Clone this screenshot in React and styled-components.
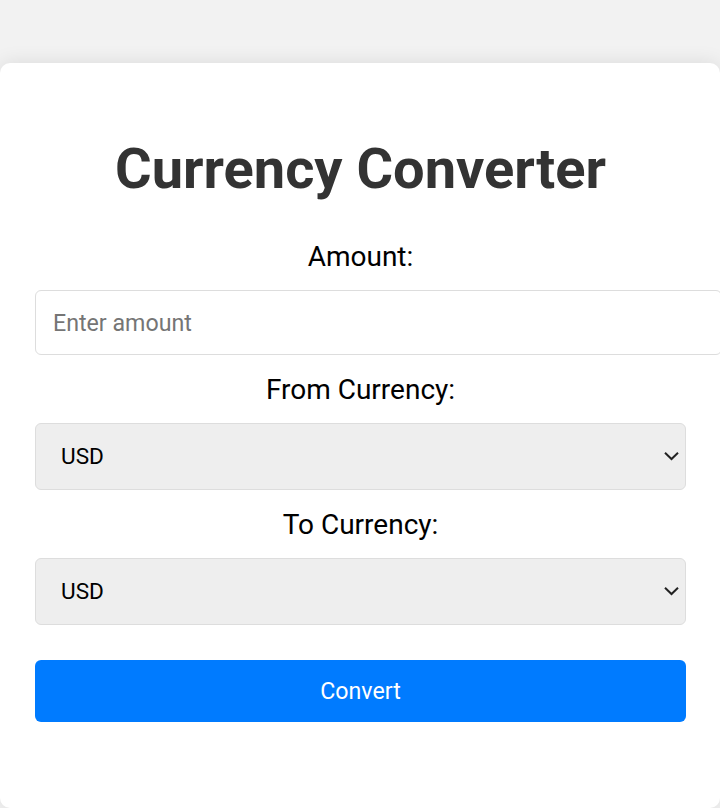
import React, { useState } from "react";
import styled, { createGlobalStyle } from "styled-components";

const GlobalStyle = createGlobalStyle`
  html, body {
    margin: 0;
    padding: 0;
    overflow: hidden;
  }
  body {
    background: #f2f2f2;
    font-family: Roboto, "Liberation Sans", Arial, sans-serif;
  }
`;

const Page = styled.div`
  display: flex;
  flex-direction: column;
  padding-top: 63px;
`;

const Card = styled.div`
  background: #fff;
  border-radius: 10px;
  box-shadow: 0 0 20px rgba(0, 0, 0, 0.1);
  padding: 35px 34px 86px 35px;
  overflow: hidden;
  text-align: center;
`;

const Title = styled.h1`
  margin: 37.5px 0 38px;
  font-size: 56px;
  font-weight: 700;
  color: #333;
  line-height: normal;
`;

const Label = styled.label`
  display: block;
  font-size: 28px;
  color: #000;
  line-height: normal;
  margin-bottom: 17px;
`;

const Field = styled.div`
  margin-bottom: ${(p) => p.$gap}px;
`;

const AmountInput = styled.input`
  display: block;
  width: 100%;
  box-sizing: content-box;
  padding: 18px 17px 17px;
  font-family: inherit;
  font-size: 23.2px;
  line-height: normal;
  border: 1px solid #ddd;
  border-radius: 6px;
  background: #fff;
  color: #000;
  outline: none;
  &::placeholder {
    color: #757575;
  }
`;

const SelectWrap = styled.div`
  position: relative;
`;

const Select = styled.select`
  display: block;
  width: 100%;
  box-sizing: border-box;
  appearance: none;
  height: 67px;
  padding: 0 40px 0 25px;
  font-family: inherit;
  font-size: 22.6px;
  border: 1px solid #ddd;
  border-radius: 6px;
  background: #eee;
  color: #000;
  outline: none;
`;

const Chevron = styled.svg`
  position: absolute;
  right: 7px;
  top: 50%;
  transform: translateY(-50%);
  pointer-events: none;
`;

const Button = styled.button`
  display: block;
  width: 100%;
  height: 62px;
  border: none;
  border-radius: 6px;
  background: #007bff;
  color: #fff;
  font-family: inherit;
  font-size: 23.2px;
  cursor: pointer;
`;

const currencies = ["USD", "EUR", "GBP", "JPY", "INR"];

function CurrencySelect({ value, onChange }) {
  return (
    <SelectWrap>
      <Select value={value} onChange={(e) => onChange(e.target.value)}>
        {currencies.map((c) => (
          <option key={c} value={c}>
            {c}
          </option>
        ))}
      </Select>
      <Chevron width="15" height="10" viewBox="0 0 15 10" fill="none">
        <path d="M1 1.8 L7.5 8 L14 1.8" stroke="#222" strokeWidth="2" />
      </Chevron>
    </SelectWrap>
  );
}

export default function App() {
  const [amount, setAmount] = useState("");
  const [from, setFrom] = useState("USD");
  const [to, setTo] = useState("USD");
  return (
    <Page>
      <GlobalStyle />
      <Card>
        <Title>Currency Converter</Title>
        <Label htmlFor="amount">Amount:</Label>
        <Field $gap={18}>
          <AmountInput
            id="amount"
            type="number"
            placeholder="Enter amount"
            value={amount}
            onChange={(e) => setAmount(e.target.value)}
          />
        </Field>
        <Label>From Currency:</Label>
        <Field $gap={18}>
          <CurrencySelect value={from} onChange={setFrom} />
        </Field>
        <Label>To Currency:</Label>
        <Field $gap={35}>
          <CurrencySelect value={to} onChange={setTo} />
        </Field>
        <Button>Convert</Button>
      </Card>
    </Page>
  );
}
